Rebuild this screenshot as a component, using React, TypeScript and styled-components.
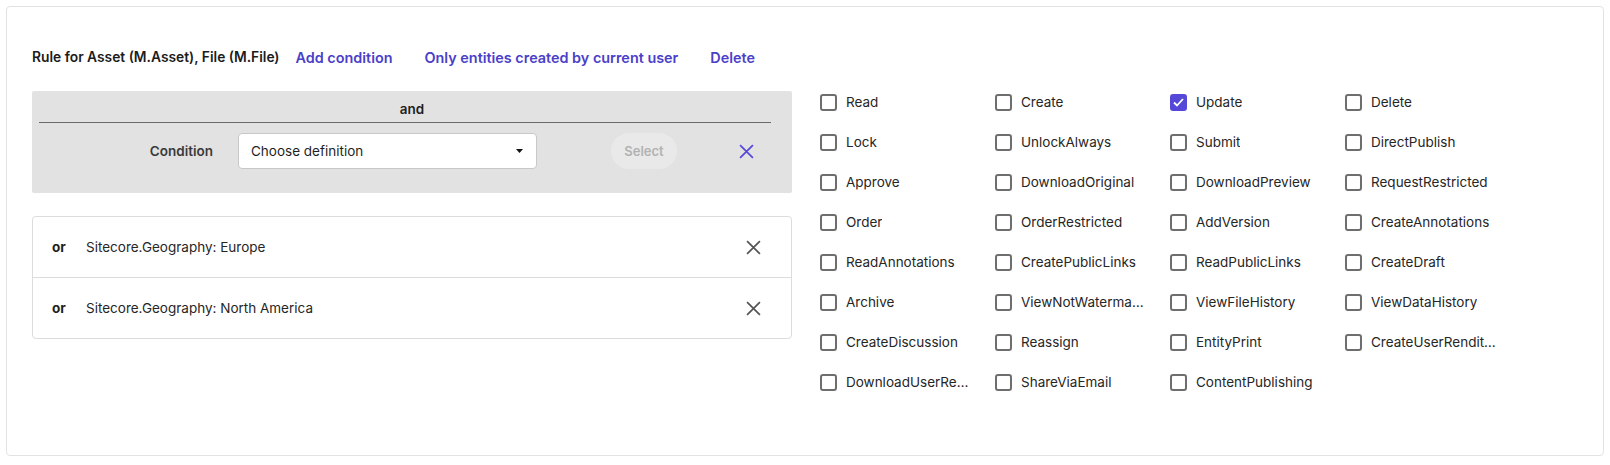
import React from "react";
import styled, { createGlobalStyle } from "styled-components";

const GlobalStyle = createGlobalStyle`
  html, body {
    margin: 0;
    padding: 0;
    background: #ffffff;
  }
  body {
    font-family: Inter, "Open Sans", "Liberation Sans", sans-serif;
    color: #1f1f1f;
  }
`;

const Page = styled.div`
  padding: 6px;
`;

const Card = styled.div`
  box-sizing: border-box;
  height: 450px;
  border: 1px solid #e2e2e2;
  border-radius: 4px;
  padding: 40px 25px 0 25px;
`;

const Header = styled.div`
  display: flex;
  align-items: center;
  height: 20px;
  font-weight: 600;
`;

const Title = styled.span`
  font-size: 13.8px;
  color: #1c1c1c;
`;

const LinkButton = styled.button`
  border: 0;
  background: none;
  padding: 0 16px;
  font: inherit;
  font-size: 14.4px;
  font-weight: 600;
  color: #4b40c8;
  cursor: pointer;
`;

const Body = styled.div`
  display: flex;
  gap: 28px;
  margin-top: 24px;
`;

const LeftColumn = styled.div`
  width: 760px;
  flex: none;
`;

const GroupBox = styled.div`
  box-sizing: border-box;
  height: 102px;
  background: #e2e2e2;
  border-radius: 2px;
  padding: 9px 21px 0 7px;
`;

const GroupHeader = styled.div`
  text-align: center;
  font-size: 13.5px;
  font-weight: 600;
  line-height: 18px;
  padding: 0 0 4px 14px;
  border-bottom: 1px solid #6a6a6a;
`;

const ConditionRow = styled.div`
  display: flex;
  align-items: center;
  margin-top: 10px;
`;

const ConditionLabel = styled.span`
  width: 174px;
  text-align: right;
  font-size: 13.5px;
  font-weight: 600;
  color: #3a3a3a;
`;

const SelectBox = styled.div`
  box-sizing: border-box;
  width: 299px;
  height: 36px;
  margin-left: 25px;
  background: #ffffff;
  border: 1px solid #c8c8c8;
  border-radius: 4px;
  display: flex;
  align-items: center;
  justify-content: space-between;
  padding: 0 13px 0 12px;
  font-size: 13.5px;
  color: #1f1f1f;
`;

const SelectButton = styled.button`
  width: 66px;
  height: 36px;
  margin-left: 74px;
  border: 0;
  border-radius: 18px;
  background: #e9e9e9;
  color: #b2b2b2;
  font: inherit;
  font-size: 13px;
  font-weight: 600;
`;

const IconButton = styled.button<{ $color: string }>`
  display: flex;
  align-items: center;
  justify-content: center;
  border: 0;
  background: none;
  padding: 0;
  color: ${(p) => p.$color};
`;

const RemoveCondition = styled(IconButton)`
  margin-left: 62px;
`;

const OrList = styled.div`
  margin-top: 23px;
  border: 1px solid #dcdcdc;
  border-radius: 4px;
`;

const OrRow = styled.div`
  display: flex;
  align-items: center;
  height: 60px;
  padding: 0 30px 0 19px;
  font-size: 13.5px;

  & + & {
    border-top: 1px solid #dcdcdc;
  }
`;

const OrTag = styled.span`
  font-weight: 700;
  width: 34px;
`;

const OrText = styled.span`
  flex: 1;
  color: #262626;
`;

const Permissions = styled.div`
  display: grid;
  grid-template-columns: repeat(4, 175px);
  grid-auto-rows: 22px;
  row-gap: 18px;
`;

const Permission = styled.label`
  display: flex;
  align-items: center;
  gap: 9px;
  font-size: 13.5px;
  color: #262626;
`;

const Box = styled.span<{ $checked: boolean }>`
  box-sizing: border-box;
  flex: none;
  width: 17px;
  height: 17px;
  border-radius: 3px;
  border: 2px solid ${(p) => (p.$checked ? "#5548d9" : "#6e6e6e")};
  background: ${(p) => (p.$checked ? "#5548d9" : "#ffffff")};
  display: flex;
  align-items: center;
  justify-content: center;
`;

const PermissionText = styled.span`
  max-width: 127px;
  white-space: nowrap;
  overflow: hidden;
  text-overflow: ellipsis;
`;

function Cross({ size }: { size: number }) {
  return (
    <svg width={size} height={size} viewBox="0 0 14 14" fill="none">
      <path d="M1 1L13 13M13 1L1 13" stroke="currentColor" strokeWidth="1.6" />
    </svg>
  );
}

function Caret() {
  return (
    <svg width="7" height="4" viewBox="0 0 7 4">
      <path d="M0 0H7L3.5 4Z" fill="#111" />
    </svg>
  );
}

const permissions = [
  "Read", "Create", "Update", "Delete",
  "Lock", "UnlockAlways", "Submit", "DirectPublish",
  "Approve", "DownloadOriginal", "DownloadPreview", "RequestRestricted",
  "Order", "OrderRestricted", "AddVersion", "CreateAnnotations",
  "ReadAnnotations", "CreatePublicLinks", "ReadPublicLinks", "CreateDraft",
  "Archive", "ViewNotWatermarked", "ViewFileHistory", "ViewDataHistory",
  "CreateDiscussion", "Reassign", "EntityPrint", "CreateUserRenditions",
  "DownloadUserRenditions", "ShareViaEmail", "ContentPublishing",
];

const orConditions = ["Sitecore.Geography: Europe", "Sitecore.Geography: North America"];

export default function App() {
  const checked = ["Update"];

  return (
    <Page>
      <GlobalStyle />
      <Card>
        <Header>
          <Title>Rule for Asset (M.Asset), File (M.File)</Title>
          <LinkButton>Add condition</LinkButton>
          <LinkButton>Only entities created by current user</LinkButton>
          <LinkButton>Delete</LinkButton>
        </Header>

        <Body>
          <LeftColumn>
            <GroupBox>
              <GroupHeader>and</GroupHeader>
              <ConditionRow>
                <ConditionLabel>Condition</ConditionLabel>
                <SelectBox>
                  <span>Choose definition</span>
                  <Caret />
                </SelectBox>
                <SelectButton disabled>Select</SelectButton>
                <RemoveCondition $color="#5548d9">
                  <Cross size={15} />
                </RemoveCondition>
              </ConditionRow>
            </GroupBox>

            <OrList>
              {orConditions.map((text) => (
                <OrRow key={text}>
                  <OrTag>or</OrTag>
                  <OrText>{text}</OrText>
                  <IconButton $color="#555555">
                    <Cross size={15} />
                  </IconButton>
                </OrRow>
              ))}
            </OrList>
          </LeftColumn>

          <Permissions>
            {permissions.map((name) => {
              const isChecked = checked.includes(name);
              return (
                <Permission key={name}>
                  <Box $checked={isChecked}>
                    {isChecked && (
                      <svg width="11" height="9" viewBox="0 0 11 9" fill="none">
                        <path d="M1 4.5L4 7.5L10 1" stroke="#fff" strokeWidth="1.8" />
                      </svg>
                    )}
                  </Box>
                  <PermissionText>{name}</PermissionText>
                </Permission>
              );
            })}
          </Permissions>
        </Body>
      </Card>
    </Page>
  );
}
